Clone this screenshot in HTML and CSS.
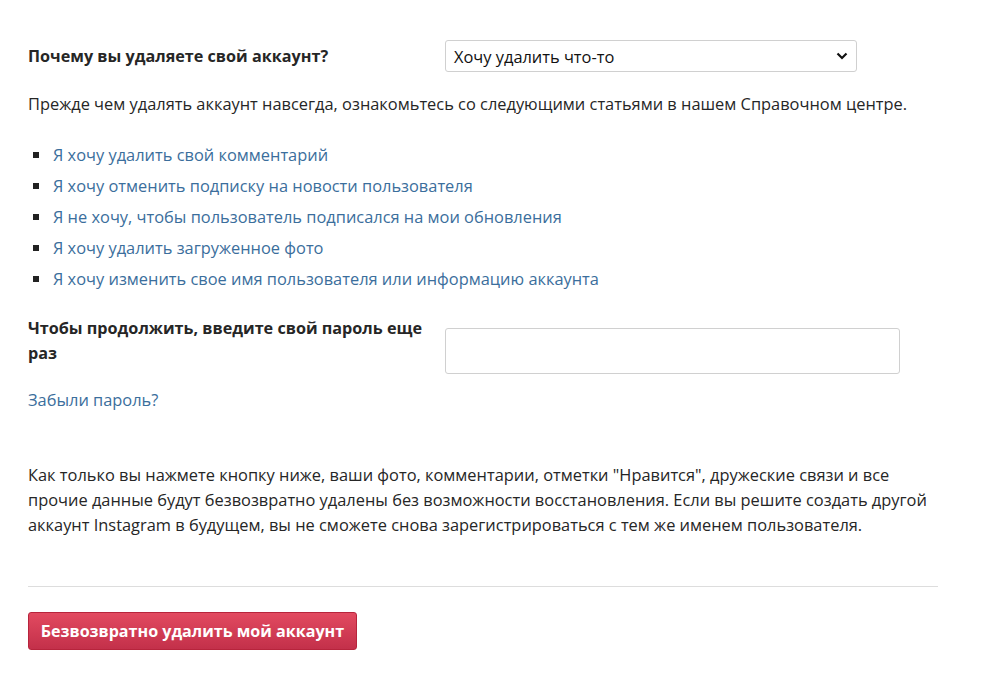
FILE: index.html
```html
<!DOCTYPE html>
<html lang="ru">
<head>
<meta charset="utf-8">
<link rel="stylesheet" href="styles.css">
</head>
<body>
<div class="page">
  <div class="row row-reason">
    <label class="label">Почему вы удаляете свой аккаунт?</label>
    <div class="select">
      <span>Хочу удалить что-то</span>
      <svg class="chev" width="12" height="8" viewBox="0 0 12 8"><path d="M1.5 1.5 L6 6 L10.5 1.5" fill="none" stroke="#111" stroke-width="2.2"/></svg>
    </div>
  </div>
  <p class="intro">Прежде чем удалять аккаунт навсегда, ознакомьтесь со следующими статьями в нашем Справочном центре.</p>
  <ul class="links">
    <li><a>Я хочу удалить свой комментарий</a></li>
    <li><a>Я хочу отменить подписку на новости пользователя</a></li>
    <li><a>Я не хочу, чтобы пользователь подписался на мои обновления</a></li>
    <li><a>Я хочу удалить загруженное фото</a></li>
    <li><a>Я хочу изменить свое имя пользователя или информацию аккаунта</a></li>
  </ul>
  <div class="row row-pass">
    <label class="label">Чтобы продолжить, введите свой пароль еще раз</label>
    <div class="input"></div>
  </div>
  <a class="forgot">Забыли пароль?</a>
  <p class="warning">Как только вы нажмете кнопку ниже, ваши фото, комментарии, отметки "Нравится", дружеские связи и все прочие данные будут безвозвратно удалены без возможности восстановления. Если вы решите создать другой аккаунт Instagram в будущем, вы не сможете снова зарегистрироваться с тем же именем пользователя.</p>
  <hr class="divider">
  <button class="delete">Безвозвратно удалить мой аккаунт</button>
</div>
</body>
</html>
```
FILE: styles.css
```css
* { box-sizing: border-box; }
html, body { margin: 0; background: #fff; }
body {
  font-family: "Open Sans", "Noto Sans", sans-serif;
  font-size: 16.4px;
  color: #262626;
  line-height: 25px;
}
.page {
  width: 910px;
  margin-left: 28px;
  padding-top: 40px;
}
.row { display: flex; }
.row-reason { align-items: center; height: 32px; }
.label {
  width: 417px;
  flex: none;
  font-weight: 700;
  font-size: 16.2px;
  padding-right: 10px;
}
.select {
  width: 412px;
  height: 32px;
  border: 1px solid #d0d0d0;
  border-radius: 3px;
  display: flex;
  align-items: center;
  justify-content: space-between;
  padding: 0 8px 0 8px;
  color: #111;
}
.intro { margin: 19px 0 0; }
.links {
  list-style: none;
  margin: 23px 0 0;
  padding: 0;
}
.links li {
  display: flex;
  align-items: center;
  height: 31px;
  line-height: 31px;
}
.links li::before {
  content: "";
  width: 6px;
  height: 6px;
  background: #222;
  margin: 0 14px 0 5px;
  flex: none;
}
.links a, .forgot { color: #3b6e9c; text-decoration: none; }
.row-pass { margin-top: 22px; align-items: flex-start; }
.input {
  width: 455px;
  height: 46px;
  margin-top: 12px;
  border: 1px solid #d0d0d0;
  border-radius: 3px;
}
.forgot { display: block; margin-top: 13px; }
.warning { margin: 50px 0 0; }
.divider {
  border: 0;
  border-top: 1px solid #dddddd;
  margin: 49px 0 0;
}
.delete {
  margin-top: 25px;
  width: 329px;
  height: 38px;
  border: 1px solid #b7243c;
  border-radius: 3px;
  background: linear-gradient(#e24a60, #c3304a);
  color: #fff;
  font-family: inherit;
  font-size: 16.1px;
  font-weight: 700;
  padding: 0;
}
```
